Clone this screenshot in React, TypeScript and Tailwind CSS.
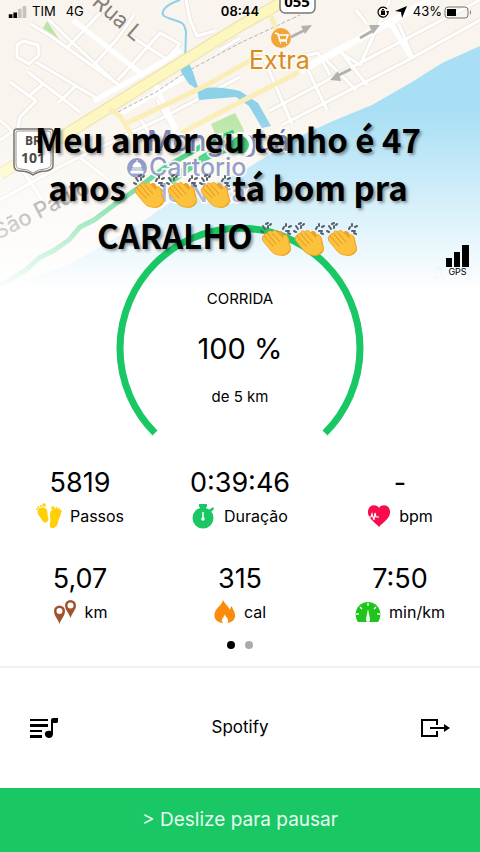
import type { ReactNode } from "react";

const CLAPS = [0, 1, 2];

const Clap = () => (
  <svg viewBox="0 0 33 36" className="inline-block h-9 w-[33px] align-[-8px]" role="img" aria-label="palmas">
    <path
      d="M3 11 1 10M5 8 3 5M8 7 8 5M6 3 8 2M10 4l1-1M23 8l1-2M26 5l0-2M26 10l3 0M29 6l2-1M28 12l2 1"
      fill="none"
      stroke="#59626a"
      strokeWidth="2"
      strokeLinecap="round"
    />
    <path d="M17 12c2-3 5-2 6 0l2 4c1-2 3-1 4 2l2 10c0 4-5 7-9 7l-7-6Z" fill="#f0a024" />
    <path
      d="M4 15c0-2 2-3 4-2-1-3 2-4 4-2 1-2 4-2 5 0l6 6c0-2 1-4 3-3 3 2 2 6 3 9 2 3 2 6-1 8-2 3-6 4-9 3-5 0-8-4-11-8l-5-6c-1-3-1-5 1-5Z"
      fill="#fdc23c"
      stroke="#f2a72b"
      strokeWidth="1"
    />
    <path d="m4 15 9 10M8 13l8 10M12 12l8 9" fill="none" stroke="#e0942a" strokeWidth="1" strokeLinecap="round" />
  </svg>
);

const STREETS =
  "M31 24 52 37 119 85M48 19 75 45 113 80M92 67 118 38 134 15M67 48 103 10M118 80 160 33 180 44 166 60M127 34 165 58M17 45 23 41 38 45 39 55 29 64 17 57ZM36 62 98 99M28 72 80 112M10 82 36 101 20 117 18 128 0 140M43 84 29 96M77 85 58 103M0 120 12 131";
const BLOCKS =
  "M186 0 190 20 197 36 215 31M220 50 240 38M265 61 292 124M280 61 318 53 330 75M324 58 356 90M340 52 360 65 390 0M356 10 367 24M399 24 412 56M269 111 360 63 480 0M282 125 410 59 480 20M340 51 367 85M306 66 327 110M0 200 63 165 160 119 240 77M20 166 44 203M0 230 30 220M79 157 109 180M140 118 154 142M157 100 175 132";

const MapView = () => (
  <svg viewBox="0 0 480 290" preserveAspectRatio="xMidYMin slice" className="absolute inset-x-0 top-0 h-[290px] w-full" aria-hidden="true">
    <defs>
      <linearGradient id="fade" x1="0" y1="0" x2="0" y2="1">
        <stop offset="0.38" stopColor="#fff" stopOpacity="0" />
        <stop offset="1" stopColor="#fff" stopOpacity="1" />
      </linearGradient>
    </defs>
    <rect width="480" height="290" fill="#f9f5ee" />
    <path d="M480 46 442 63 412 82 372 105 333 121 294 139 275 151 243 171 171 202 130 230 70 264 0 290H480Z" fill="#a9dff5" />
    <path d="m47 21 18 27-24-16Z" fill="#b9e5a5" />
    <path d="m211 124 24-11 8 15 4 18-25 4Z" fill="#b9e5a5" />

    {/* side streets, casing first */}
    <g fill="none" stroke="#ece7e0" strokeWidth="5" strokeLinejoin="round">
      <path d={STREETS} />
      <path d={BLOCKS} />
    </g>
    <g fill="none" stroke="#fff" strokeWidth="3" strokeLinejoin="round">
      <path d={STREETS} />
      <path d={BLOCKS} />
    </g>

    <g fill="none" stroke="#fff" strokeWidth="5">
      <path d="M73 20 107 47 142 74M94 101 142 74 164 61 181 50M118 115 154 94 185 77M155 84 176 130" />
      <path d="M300 71 405 14 430 0" strokeWidth="7" />
      <path d="M390 22 411 57" />
    </g>
    <path d="m118 112 38-20 30-20 54-29 60-28" fill="none" stroke="#b5b1ad" strokeWidth="1" strokeDasharray="4 2" />

    <path d="M180 0c-15 5-20 12-16 16 12 7 20 2 22 16l-1 32" fill="none" stroke="#8dd1e9" strokeWidth="2" />
    <path d="m181 62 8 1 4 9 5 15 5 2c9-3 23-1 37 2l18 12 13 23-9 2-13-22-13-9-37 3-2-11-8-5-8-12Z" fill="#8dd1e9" />

    {/* main avenue */}
    <g fill="none">
      <path d="M0 174 60 138 240 26 286 0" stroke="#eedfaa" strokeWidth="12" />
      <path d="M0 174 60 138 240 26 286 0" stroke="#fcf7bf" strokeWidth="10" />
      <path d="M123 125 205 86 260 55M181 133 240 102 299 72M109 109 120 116 131 134M270 14l10 24" stroke="#faedb7" strokeWidth="5" />
    </g>

    <g stroke="#b3b1ae" strokeWidth="3" fill="#b3b1ae">
      <path d="m291 37 14-7m55 8 14-8m-23 39-14 7" />
      <path d="m301 26 11-1-7 9ZM369 25l11 0-7 9ZM338 71l-8 9 11 1Z" stroke="none" />
    </g>

    <path d="m0 286 26-16 13-12 14-7 16-11 11-13 14-7 24-18 20-14 26-20 43-25 27-11" fill="none" stroke="#19c765" strokeWidth="5" />
    <path d="m170 181 18-13 19-12 33-13" fill="none" stroke="#19c765" strokeWidth="8" />
    <circle cx="281" cy="38" r="10" fill="#f0a638" />
    <path d="m275 33 3 1 2 7h7m-9-6h10l-2 5h-7m1 3h1m5 0h1" fill="none" stroke="#fff" strokeWidth="1.6" />
    <g fontFamily="Inter, sans-serif">
      <text x="91" y="4" fontSize="22" fill="#85807a" transform="rotate(41 91 4)">Rua L</text>
      <text x="-2" y="240" fontSize="22" fontWeight="500" fill="#77716b" transform="rotate(-27 -2 240)">São Paulo</text>
      <text x="249" y="69" fontSize="25" fill="#d68c25" stroke="#fffaf0" strokeWidth="3" paintOrder="stroke">Extra</text>
      <g fontSize="25" fontWeight="500" fill="#6374b0" stroke="#fffaf0" strokeWidth="3" paintOrder="stroke">
        <text x="147" y="151" fontSize="28">Mongaguá</text>
        <text x="149" y="176">Cartorio</text>
        <text x="152" y="202">de Notas</text>
      </g>
      <text x="431" y="282" fontSize="22" fill="#83add1">A t l</text>
    </g>
    <circle cx="137" cy="168" r="10" fill="#6374b0" />
    <path d="M131 171h12v2h-12Zm1-2h10m-9-2c0-6 8-6 8 0Zm4-7v3" fill="#fff" stroke="#fff" />
    <circle cx="240" cy="145" r="11" fill="#19c765" stroke="#fff" strokeWidth="4" />
    <rect width="480" height="290" fill="url(#fade)" />

    <rect x="280" y="-15" width="35" height="28" rx="5" fill="#fff" stroke="#777" strokeWidth="1.5" />
    <g textAnchor="middle" fontFamily="'Open Sans', 'Liberation Sans', sans-serif" fontWeight="700">
      <text x="297" y="7" fontSize="15">055</text>
    </g>
    <path d="M17 129h33q3 0 3 3v33q0 5-7 6-8 0-13 4-5-4-13-4-6 0-6-6v-33q0-3 3-3Z" fill="#fff" stroke="#77736e" strokeWidth="1.5" />
    <path d="M18 131h30q3 0 3 3v30q0 4-6 5-7 0-12 4-5-4-12-4-5 0-5-5v-31q0-2 2-2Z" fill="none" stroke="#9a9692" strokeWidth="1" />
    <g textAnchor="middle" fontFamily="'Liberation Sans Narrow', 'Open Sans', sans-serif" fontWeight="700" fill="#4b4845">
      <text x="33" y="145" fontSize="12">BR</text>
      <text x="33" y="163" fontSize="14">101</text>
    </g>
  </svg>
);

const StatusBar = () => (
  <header className="relative grid h-6 grid-cols-3 items-center px-2 text-[13px] text-black">
    <div className="flex items-center gap-1">
      <svg viewBox="0 0 20 13" className="h-3 w-5">
        <path d="M0 9h4v4H0Zm5-2h4v6H5Z" />
        <path d="M10 3h4v10h-4Zm5-3h4v13h-4Z" fill="#c6c3bf" />
      </svg>
      <span>TIM</span>
      <span className="ml-1.5">4G</span>
    </div>
    <span className="text-center font-semibold">08:44</span>
    <div className="flex items-center justify-end gap-1.5">
      <svg viewBox="0 0 12 12" className="size-3">
        <path d="M10 3a5 5 0 1 0 1 4" fill="none" stroke="#000" strokeWidth="1.2" />
        <path d="m12 5-3 0 2 3ZM4 5h4v4H4Z" />
        <path d="M5 5V4q1-2 2 0v1" fill="none" stroke="#000" />
      </svg>
      <svg viewBox="0 0 12 12" className="size-3"><path d="M12 0 7 12 6 6 0 5Z" /></svg>
      <span>43%</span>
      <svg viewBox="0 0 28 13" className="-ml-1 h-[13px] w-7">
        <rect x="1" y="1" width="23" height="11" rx="3" fill="none" stroke="#77736e" />
        <path d="M3 3h9v7H3Z" />
        <path d="M26 4q2 2 0 5Z" fill="#77736e" />
      </svg>
    </div>
  </header>
);

const FeetIcon = () => (
  <svg viewBox="0 0 26 26" className="size-[26px]" fill="#ffcf0a">
    <path d="M2 7c1-3 7-4 9 0 1 3 0 4 1 7 2 5-4 8-6 3C5 14 0 11 2 7Z" />
    <path d="M16 7c4-3 9-1 9 3 0 3-2 5-3 9-1 8-10 8-8 1 1-3 0-4 0-7 0-3 0-5 2-6Z" />
    <circle cx="8" cy="2" r="1.8" />
    <circle cx="5" cy="3" r="1" />
    <circle cx="2.500" cy="4" r="1" />
    <circle cx="1" cy="6" r="1" />
    <circle cx="17" cy="5" r="1.800" />
    <circle cx="20.500" cy="5" r="1" />
    <circle cx="23" cy="6" r="1" />
    <circle cx="25" cy="8" r="1" />
  </svg>
);

const WatchIcon = () => (
  <svg viewBox="0 0 24 26" className="h-[26px] w-6">
    <circle cx="11" cy="15" r="10.5" fill="#19c765" />
    <path d="M7 1h8v3h-1v3H8V4H7Zm10 6 4-3 1 2-3 3Z" fill="#19c765" />
    <path d="M11 9v7" stroke="#fff" strokeWidth="1.5" />
    <circle cx="11" cy="16" r="1.8" fill="#fff" />
  </svg>
);

const HeartIcon = () => (
  <svg viewBox="0 0 24 24" className="size-6">
    <path d="M12 23C8 18 0 14 1 7 2 0 10 0 12 4 14 0 22 0 23 7c1 7-7 11-11 16Z" fill="#f90b4e" />
    <path d="M1 13h3l1-3 2 6 1-7 1 4h3" fill="none" stroke="#fff" strokeWidth="1.2" />
  </svg>
);

const PinsIcon = () => (
  <svg viewBox="0 0 24 26" className="h-[26px] w-6" fill="#a0522d" fillRule="evenodd">
    <path d="M6.500 25C5 20 1 17 1 12a5.500 5.500 0 0 1 11 0c0 5-4 8-5.500 13Zm0-16a3 3 0 1 0 0 6 3 3 0 0 0 0-6Z" />
    <path d="M17.500 19C16 14 12 11 12 6.500a5.500 5.500 0 0 1 11 0c0 4.500-4 7.500-5.500 12.500Zm0-15.500a3 3 0 1 0 0 6 3 3 0 0 0 0-6Z" />
  </svg>
);

const FlameIcon = () => (
  <svg viewBox="0 0 22 24" className="h-6 w-[22px]">
    <path d="M9 0c-1 5-6 7-8 12-2 6 1 11 10 11s12-6 9-12c-1-2-2-3-2-5-1 1-2 2-2 4C14 6 11 4 9 0ZM4 9c0 2 1 3 2 4" fill="#fb8c0b" />
    <path d="M11 14c0 3 4 4 3 8l-1 1H9c-3-4 1-5 2-9Z" fill="#fff" />
  </svg>
);

const GaugeIcon = () => (
  <svg viewBox="0 0 26 22" className="h-[22px] w-[26px]">
    <path d="M3 21C-3 12 3 1 13 1s16 11 10 20Z" fill="#20c51b" />
    <path d="M13 2v3M5 6l2 2m14-2-2 2M1 13h3m18 0h3" stroke="#fff" strokeWidth="1.4" />
    <path d="m13 8 2 10q0 3-2 3t-2-3Z" fill="#fff" />
  </svg>
);

const stats: { value: string; label: string; icon: ReactNode }[] = [
  { value: "5819", label: "Passos", icon: <FeetIcon /> },
  { value: "0:39:46", label: "Duração", icon: <WatchIcon /> },
  { value: "-", label: "bpm", icon: <HeartIcon /> },
  { value: "5,07", label: "km", icon: <PinsIcon /> },
  { value: "315", label: "cal", icon: <FlameIcon /> },
  { value: "7:50", label: "min/km", icon: <GaugeIcon /> },
];

const App = () => {
  return (
    <main className="relative flex min-h-screen flex-col bg-white font-['Inter',sans-serif] text-black">
      <MapView />
      <StatusBar />

      <section className="relative mx-auto mt-[201px] flex h-[211px] w-[248px] flex-col items-center pt-16">
        <svg viewBox="0 0 248 211" className="absolute inset-0 h-full w-full" aria-hidden="true">
          <path d="M39 208A120 120 0 1 1 209 208" fill="none" stroke="#19c765" strokeWidth="7" />
        </svg>
        <p className="text-[15px] leading-5">CORRIDA</p>
        <p className="mt-[22px] text-[29px] leading-9">100 %</p>
        <p className="mt-5 text-[15px] leading-5">de 5 km</p>
      </section>

      <section className="grid grid-cols-3 gap-y-[30px] pt-[29px]">
        {stats.map(({ value, label, icon }) => (
          <div key={label} className="flex flex-col items-center">
            <p className="text-[27px] leading-9">{value}</p>
            <div className="flex h-[30px] items-center gap-2 text-base leading-5">
              {icon}
              <span>{label}</span>
            </div>
          </div>
        ))}
      </section>

      <div className="mt-[10px] flex h-4 items-center justify-center gap-2.5">
        <span className="size-2 rounded-full bg-black" />
        <span className="size-2 rounded-full bg-[#aaa]" />
      </div>

      <section className="mt-[13px] grid h-[122px] grid-cols-3 items-center border-t-2 border-[#f0f0f0] px-[30px]">
        <button aria-label="Playlist">
          <svg viewBox="0 0 28 20" className="h-5 w-7">
            <path d="M0 1h18v2H0Zm0 5h18v3H0Zm0 6h12v2H0Zm0 5h12v3H0Z" />
            <path d="M21 2q0-2 2-2h5v4l-1 1h-4v11c0 5-7 5-8 1s3-5 6-4Z" />
          </svg>
        </button>
        <button className="text-center text-[17px]">Spotify</button>
        <button className="flex justify-end" aria-label="Sair">
          <svg viewBox="0 0 30 20" className="h-5 w-[30px]">
            <path d="M17 7V2H2v16h15v-5M10 10h16" fill="none" stroke="#000" strokeWidth="2" />
            <path d="m24 6 6 4-6 4Z" />
          </svg>
        </button>
      </section>

      <button className="min-h-16 flex-1 bg-[#19c765] text-[19px] text-white/90">&gt; Deslize para pausar</button>

      <div className="absolute right-[11px] top-[244px] flex flex-col items-center">
        <svg viewBox="0 0 23 23" className="size-[23px]"><path d="M0 14h6v9H0Zm8-6h6v15H8Zm8-7h7v22h-7Z" /></svg>
        <span className="text-[9px] leading-[10px]">GPS</span>
      </div>

      <p className="absolute inset-x-0 top-[115px] pr-6 text-center font-['Noto_Sans_CJK_SC',sans-serif] text-[33px] font-bold leading-[48px] [text-shadow:2px_2px_3px_rgba(0,0,0,0.4)]">
        <span className="block">Meu amor eu tenho é 47</span>
        <span className="block">anos {CLAPS.map((n) => <Clap key={n} />)}tá bom pra</span>
        <span className="block">CARALHO {CLAPS.map((n) => <Clap key={n} />)}</span>
      </p>
    </main>
  );
};

export default App;
